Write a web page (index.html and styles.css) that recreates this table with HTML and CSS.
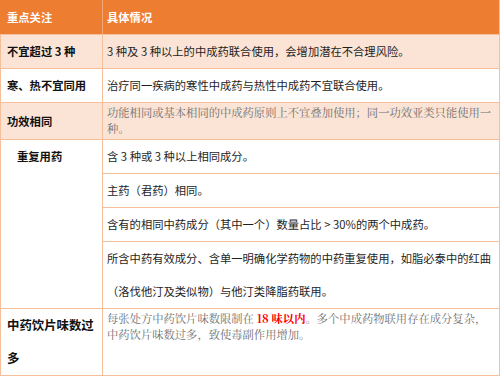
FILE: index.html
```html
<!DOCTYPE html>
<html lang="zh">
<head>
<meta charset="utf-8">
<link rel="stylesheet" href="styles.css">
</head>
<body>
<table class="tbl">
  <colgroup><col class="c1"><col class="c2"></colgroup>
  <tr class="head"><th>重点关注</th><th class="r">具体情况</th></tr>
  <tr class="peach"><td class="k">不宜超过 3 种</td><td class="r">3 种及 3 种以上的中成药联合使用，会增加潜在不合理风险。</td></tr>
  <tr><td class="k">寒、热不宜同用</td><td class="r">治疗同一疾病的寒性中成药与热性中成药不宜联合使用。</td></tr>
  <tr class="peach"><td class="k">功效相同</td><td class="r serif">功能相同或基本相同的中成药原则上不宜叠加使用；同一功效亚类只能使用一种。</td></tr>
  <tr><td class="k top indent" rowspan="4">重复用药</td><td class="r">含 3 种或 3 种以上相同成分。</td></tr>
  <tr><td class="r">主药（君药）相同。</td></tr>
  <tr><td class="r">含有的相同中药成分（其中一个）数量占比 &gt; 30%的两个中成药。</td></tr>
  <tr><td class="r">所含中药有效成分、含单一明确化学药物的中药重复使用，如脂必泰中的红曲（洛伐他汀及类似物）与他汀类降脂药联用。</td></tr>
  <tr><td class="k top big">中药饮片味数过多</td><td class="r serif top">每张处方中药饮片味数限制在 <span class="red">18 味以内</span>。多个中成药物联用存在成分复杂，中药饮片味数过多，致使毒副作用增加。</td></tr>
</table>
</body>
</html>
```
FILE: styles.css
```css
html, body {
  margin: 0;
  padding: 0;
  background: #ffffff;
}
body {
  font-family: "Noto Sans CJK SC", "Noto Sans", sans-serif;
  font-size: 11.3px;
  color: #1e1e1e;
}
.tbl {
  border-collapse: collapse;
  width: 499px;
  table-layout: fixed;
}
.c1 { width: 102px; }
.c2 { width: 397px; }
.tbl th, .tbl td {
  border: 1px solid #f6bf9b;
  padding: 0 4px 0 6px;
  line-height: 33px;
  text-align: left;
  vertical-align: middle;
  word-break: break-all;
}
.tbl td.r, .tbl th.r { padding-left: 4px; padding-right: 2px; }
.head th {
  background: #ed7d31;
  color: #ffffff;
  font-weight: bold;
  height: 33px;
  border-color: #ed7d31;
  border-right-color: #f4a674;
  border-bottom-color: #f6bf9b;
}
.head th:last-child { border-right-color: #f6bf9b; }
.peach td { background: #fbe4d5; }
.k { font-weight: bold; color: #111; }
.indent { padding-left: 16px !important; }
.top { vertical-align: top !important; }
.big { font-size: 12.4px; }
.serif {
  font-family: "Noto Serif CJK SC", "Noto Sans CJK SC", serif;
  color: #6f6f6f;
  line-height: 16px !important;
  padding-top: 1px !important;
  padding-bottom: 3px !important;
}
.red { color: #ff0000; font-weight: bold; }
```
